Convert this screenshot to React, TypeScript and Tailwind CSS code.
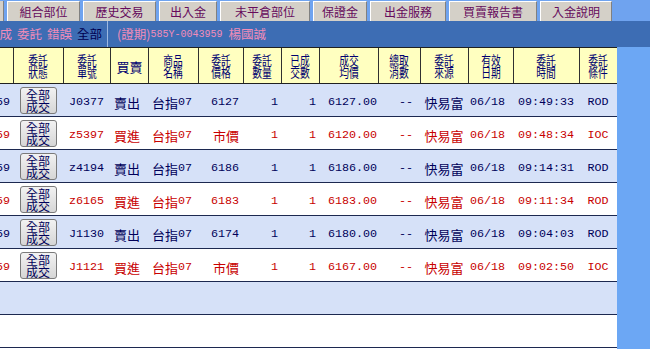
const cjk = 'font-["Noto_Sans_CJK_TC",sans-serif]';
const mono = 'font-["Liberation_Mono","Noto_Sans_CJK_TC",monospace]';

const tabs = [
  { label: '組合部位', w: 'w-[73px]' },
  { label: '歷史交易', w: 'w-[73px]' },
  { label: '出入金', w: 'w-[58px]' },
  { label: '未平倉部位', w: 'w-[90px]' },
  { label: '保證金', w: 'w-[54px]' },
  { label: '出金服務', w: 'w-[76px]' },
  { label: '買賣報告書', w: 'w-[88px]' },
  { label: '入金說明', w: 'w-[72px]' },
];

const cols =
  'grid grid-cols-[13px_50px_47px_38px_50px_45px_38px_38px_59px_42px_48px_45px_66px_38px]';

const headers = [
  ['', ''],
  ['委託', '狀態'],
  ['委託', '單號'],
  ['買賣'],
  ['商品', '名稱'],
  ['委託', '價格'],
  ['委託', '數量'],
  ['已成', '交數'],
  ['成交', '均價'],
  ['總取', '消數'],
  ['委託', '來源'],
  ['有效', '日期'],
  ['委託', '時間'],
  ['委託', '條件'],
];

interface Order {
  no: string;
  side: '賣出' | '買進';
  price: string;
  avg: string;
  time: string;
  cond: string;
}

const orders: Order[] = [
  { no: 'J0377', side: '賣出', price: '6127', avg: '6127.00', time: '09:49:33', cond: 'ROD' },
  { no: 'z5397', side: '買進', price: '市價', avg: '6120.00', time: '09:48:34', cond: 'IOC' },
  { no: 'z4194', side: '賣出', price: '6186', avg: '6186.00', time: '09:14:31', cond: 'ROD' },
  { no: 'z6165', side: '買進', price: '6183', avg: '6183.00', time: '09:11:34', cond: 'ROD' },
  { no: 'J1130', side: '賣出', price: '6174', avg: '6180.00', time: '09:04:03', cond: 'ROD' },
  { no: 'J1121', side: '買進', price: '市價', avg: '6167.00', time: '09:02:50', cond: 'IOC' },
];

const OrderRow = ({ order, index }: { order: Order; index: number }) => {
  const color = order.side === '買進' ? 'text-[#c80000]' : 'text-[#00005a]';
  const bg = index % 2 === 0 ? 'bg-[#d6e1f8]' : 'bg-white';
  const cell = 'flex items-center pt-[5px] whitespace-nowrap overflow-hidden';
  const num = `${cell} ${mono} text-[11.7px]`;
  const han = `${cell} ${cjk} text-[13px]`;
  return (
    <div className={`${cols} h-[33px] border-b border-[#1c2850] ${bg} ${color}`}>
      <div className={`${num} justify-end pr-[3px]`}>59</div>
      <div className="flex items-center justify-center pt-[1px]">
        <div
          className={`w-[37px] h-[27px] rounded-[3px] border border-[#7a7a7a] bg-gradient-to-b from-[#f2f2f2] to-[#d6d6d6] text-[#00005a] ${cjk} text-[12px] leading-[12px] flex flex-col items-center justify-center`}
        >
          <span>全部</span>
          <span>成交</span>
        </div>
      </div>
      <div className={`${num} pl-[6px]`}>{order.no}</div>
      <div className={`${han} pl-[4px]`}>{order.side}</div>
      <div className={`${cell} pl-[4px]`}>
        <span className={`${cjk} text-[13px]`}>台指</span>
        <span className={`${mono} text-[11.7px]`}>07</span>
      </div>
      <div className={`${order.price === '市價' ? han : num} justify-end pr-[4px]`}>
        {order.price}
      </div>
      <div className={`${num} justify-end pr-[3px]`}>1</div>
      <div className={`${num} justify-end pr-[3px]`}>1</div>
      <div className={`${num} justify-end pr-[1px]`}>{order.avg}</div>
      <div className={`${num} justify-end pr-[7px]`}>--</div>
      <div className={`${han} justify-center`}>快易富</div>
      <div className={`${num} pl-[2px]`}>06/18</div>
      <div className={`${num} justify-center`}>{order.time}</div>
      <div className={`${num} justify-center`}>{order.cond}</div>
    </div>
  );
};

export default function App() {
  return (
    <div className="w-[650px] h-[349px] overflow-hidden bg-[#6fa3ef] flex flex-col">
      <div className="h-[21px] pt-[1px] flex gap-[3px] shrink-0">
        <div className="w-[4px] h-[20px] bg-[#d4d0c8] border-r border-[#808080]" />
        {tabs.map((t) => (
          <div
            key={t.label}
            className={`${t.w} h-[20px] bg-[#d4d0c8] border-t border-l border-white border-r border-r-[#808080] flex items-center justify-center ${cjk} text-[12px] text-[#660a5c]`}
          >
            {t.label}
          </div>
        ))}
      </div>

      <div className={`h-[26px] shrink-0 bg-[#3d6db4] flex items-center ${cjk} text-[12.5px] text-[#f28cb8]`}>
        <div className="w-[121px] shrink-0 h-full flex items-center gap-[5px] -ml-[13px] border-r border-[#9db8e0] whitespace-nowrap">
          <span className="shrink-0">未成</span>
          <span className="shrink-0">委託</span>
          <span className="shrink-0">錯誤</span>
          <span className="shrink-0 text-[#000050]">全部</span>
        </div>
        <div className="pl-[9px] flex items-center whitespace-nowrap">
          <span>(證期)</span>
          <span className={`${mono} text-[10px]`}>585Y-0043959</span>
          <span className="ml-[6px]">楊國誠</span>
        </div>
      </div>

      <div className="flex flex-1 min-h-0">
        <div className="w-[617px] bg-white">
          <div className={`${cols} h-[37px] bg-[#ffffc0] border-y border-[#202020] text-[#000070] ${cjk}`}>
            {headers.map((h, i) => (
              <div
                key={i}
                className={`flex flex-col items-center justify-center ${i > 0 ? 'border-l border-[#303030]' : ''}`}
              >
                {h.length === 1 ? (
                  <span className="text-[13px] leading-[13px] pt-[2px]">{h[0]}</span>
                ) : (
                  <>
                    <span className="block text-[13px] leading-[12px] scale-x-[0.75] pt-[1px]">{h[0]}</span>
                    <span className="block text-[13px] leading-[12px] scale-x-[0.75]">{h[1]}</span>
                  </>
                )}
              </div>
            ))}
          </div>
          {orders.map((o, i) => (
            <OrderRow key={o.no} order={o} index={i} />
          ))}
          <div className="h-[33px] border-b border-[#1c2850] bg-[#d6e1f8]" />
          <div className="h-[33px] border-b border-[#1c2850] bg-white" />
        </div>
        <div className="flex-1 bg-[#6ca7f4]" />
      </div>
    </div>
  );
}
